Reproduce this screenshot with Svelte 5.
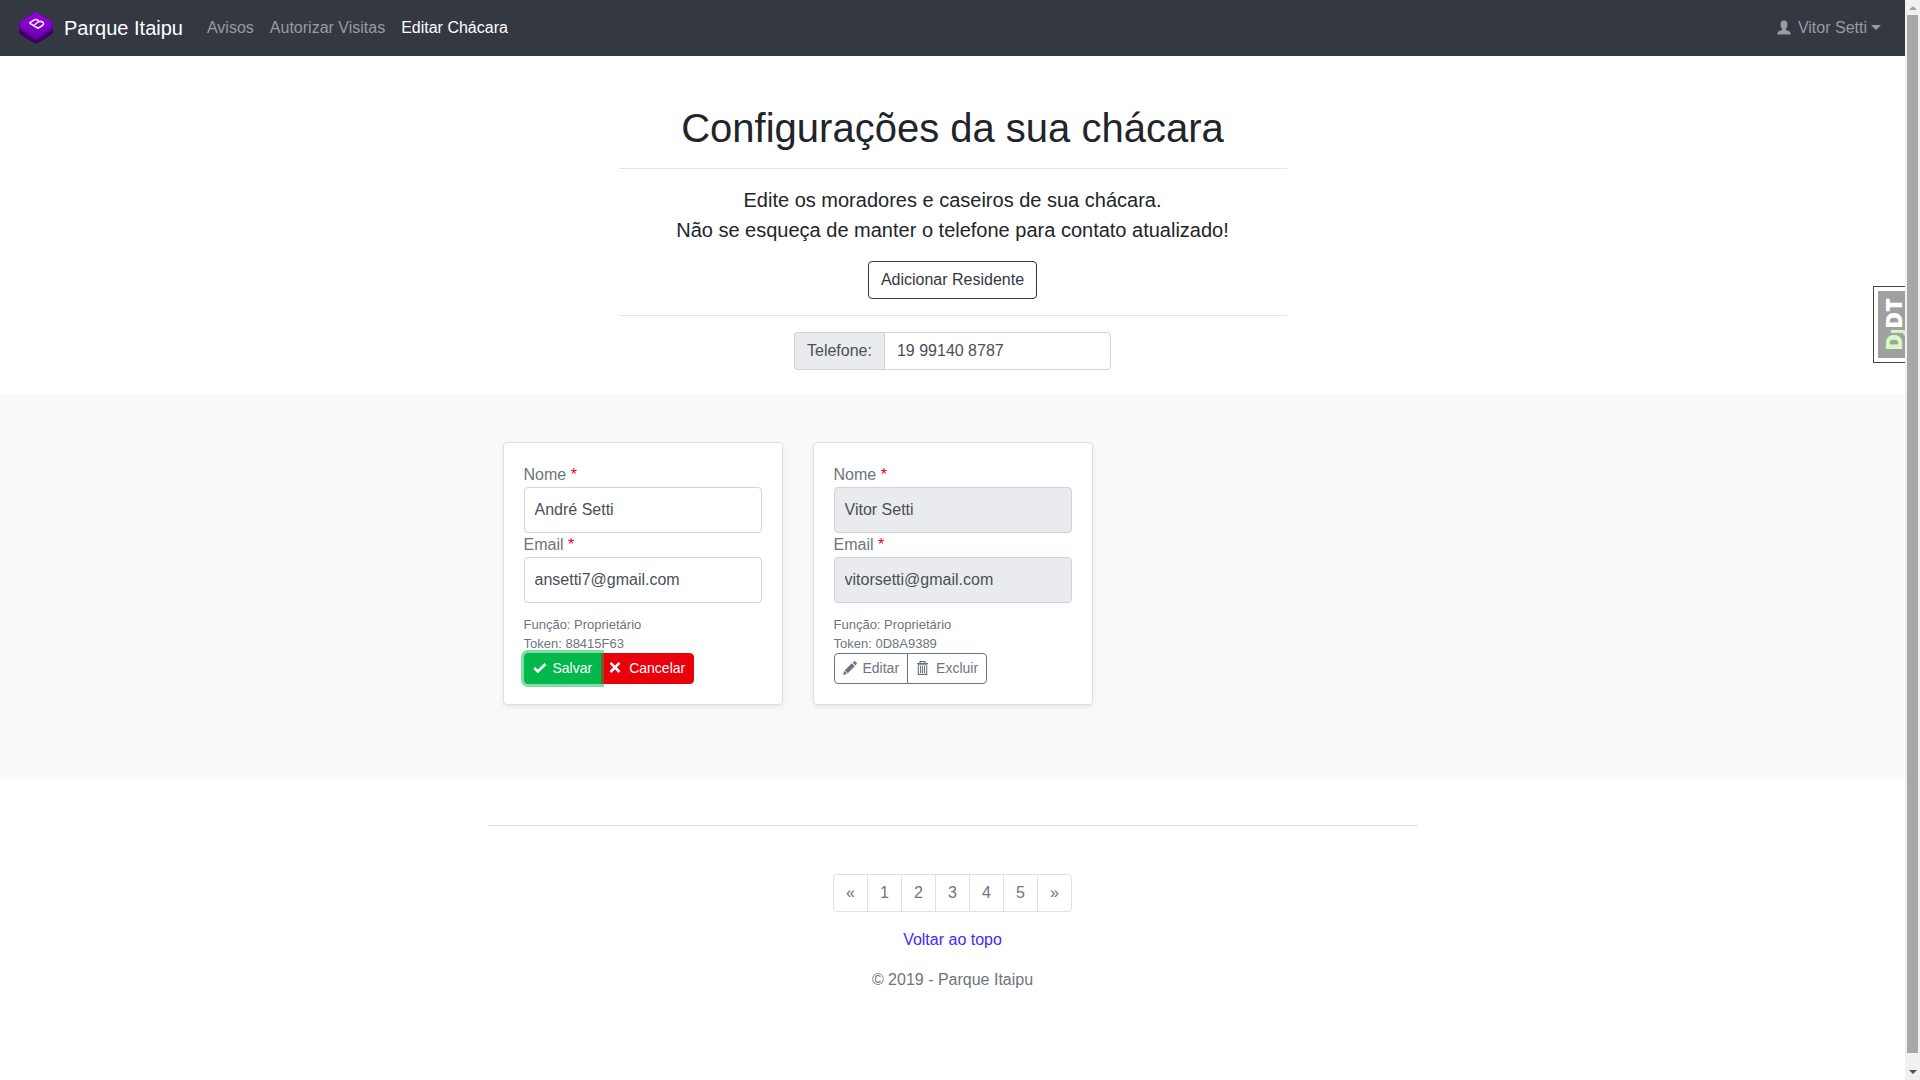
<script>
  const links = ['Avisos', 'Autorizar Visitas', 'Editar Chácara'];
  const pages = ['«', '1', '2', '3', '4', '5', '»'];
  const residents = [
    { id: 'r1', name: 'André Setti', email: 'ansetti7@gmail.com', role: 'Proprietário', token: '88415F63', editing: true },
    { id: 'r2', name: 'Vitor Setti', email: 'vitorsetti@gmail.com', role: 'Proprietário', token: '0D8A9389', editing: false }
  ];
  let phone = '19 99140 8787';
</script>

<div class="window">
  <div class="page">
    <nav class="navbar">
      <a class="brand" href="#inicio">
        <svg class="logo" viewBox="-1 2 38 38" aria-hidden="true">
          <defs>
            <linearGradient id="top" x1="0" y1="0" x2="0" y2="1">
              <stop offset="0" stop-color="#9b00e0" />
              <stop offset="1" stop-color="#6a00ae" />
            </linearGradient>
          </defs>
          <path d="M2 16.500Q2 15 4 14L17 6Q19 5 21 6L34 14Q36 15 36 16.500V25Q36 26.500 34 28L21 36Q19 37 17 36L4 28Q2 26.500 2 25Z" fill="#3d0066" />
          <path d="M2 16.500V21.500Q2 23 4 24L17 32Q19 33.500 21 32L34 24Q36 23 36 21.500V16.500Z" fill="#5a0096" />
          <path d="M3 17Q1.500 15.500 4 14L17 6Q19 4.500 21 6L34 14Q36.500 15.500 35 17V20Q35 21 33 22L21 30.500Q19 32 17 30.500L5 22Q3 21 3 20Z" fill="url(#top)" />
          <path d="M12.300 16L21 21.300L25.500 18.500Q27.500 16.500 25.500 15Q23.500 13.800 21 15L17 18.500M12.300 16L16.500 13.300Q19 12 20.700 13Q22 14 21 15" fill="none" stroke="#f3e4fb" stroke-width="1.600" stroke-linejoin="round" />
        </svg>
        <span>Parque Itaipu</span>
      </a>
      <div class="links">
        {#each links as link, i}
          <a href="#nav{i}" class:active={i === 2}>{link}</a>
        {/each}
      </div>
      <a class="user" href="#conta">
        <svg viewBox="0 0 14 16" aria-hidden="true"><path d="M7 .5C9.600 .5 10.600 2.200 10.400 4.800C10.300 7 9.500 8 9 8.800V10L12.300 11.200Q13.700 12 13.700 14.500H.3Q.3 12 1.700 11.200L5 10V8.800C4.500 8 3.700 7 3.600 4.800C3.400 2.200 4.400 .5 7 .5Z" fill="currentColor" /></svg>
        <span>Vitor Setti</span>
        <i class="caret"></i>
      </a>
    </nav>

    <header class="intro">
      <h1>Configurações da sua chácara</h1>
      <hr />
      <p>Edite os moradores e caseiros de sua chácara.<br />Não se esqueça de manter o telefone para contato atualizado!</p>
      <button class="add" type="button">Adicionar Residente</button>
      <hr />
      <div class="phone">
        <label for="phone">Telefone:</label>
        <input id="phone" type="text" bind:value={phone} />
      </div>
    </header>

    <main class="album">
      <div class="row">
        {#each residents as r}
          <form class="card">
            <label for="{r.id}-name">Nome <span class="req">*</span></label>
            <input id="{r.id}-name" type="text" value={r.name} disabled={!r.editing} />
            <label for="{r.id}-email">Email <span class="req">*</span></label>
            <input id="{r.id}-email" type="email" value={r.email} disabled={!r.editing} />
            <p class="meta">Função: {r.role}<br />Token: {r.token}</p>
            <div class="group">
              {#if r.editing}
                <button type="button" class="save">
                  <svg viewBox="0 0 14 14" aria-hidden="true"><path d="M1.200 7L4.800 10.500L12.500 3" fill="none" stroke="currentColor" stroke-width="2.600" /></svg>
                  <span>Salvar</span>
                </button>
                <button type="button" class="cancel">
                  <svg viewBox="0 0 14 14" aria-hidden="true"><path d="M1.500 1.800L10.500 11M10.500 1.800L1.500 11" fill="none" stroke="currentColor" stroke-width="2.600" /></svg>
                  <span>Cancelar</span>
                </button>
              {:else}
                <button type="button" class="plain">
                  <svg viewBox="0 0 14 14" aria-hidden="true"><path d="M0 14L1.200 9.800L4.200 12.800ZM1.800 9.200L8.800 2.300L11.700 5.200L4.800 12.200ZM9.600 1.600L11 .4Q11.700 -.2 12.400 .4L13.600 1.600Q14.200 2.300 13.600 3L12.400 4.400Z" fill="currentColor" /></svg>
                  <span>Editar</span>
                </button>
                <button type="button" class="plain">
                  <svg viewBox="0 0 14 14" aria-hidden="true"><path d="M1 2.500H12M4 2V.6H9V2M2.300 4.500V13.400H10.700V4.500M4.500 5V12M6.500 5V12M8.500 5V12M1.500 3.800H11.500" fill="none" stroke="currentColor" stroke-width="1.100" /></svg>
                  <span>Excluir</span>
                </button>
              {/if}
            </div>
          </form>
        {/each}
      </div>
    </main>

    <footer class="footer">
      <hr />
      <ul class="pagination">
        {#each pages as p, i}
          <li><a href="#p{i}">{p}</a></li>
        {/each}
      </ul>
      <p><a href="#topo">Voltar ao topo</a></p>
      <p>© 2019 - Parque Itaipu</p>
    </footer>

    <button class="debug" type="button" aria-label="Mostrar barra de depuração">
      <span class="handle"><span class="word"><span class="dj">D<small>J</small></span>DT</span></span>
    </button>
  </div>

  <div class="scrollbar" aria-hidden="true">
    <i class="up"></i>
    <i class="thumb"></i>
    <i class="down"></i>
  </div>
</div>

<style>
  :global(body) {
    margin: 0;
    background: #fff;
    color: #212529;
    font: 16px/24px "Liberation Sans", Arial, sans-serif;
  }
  * { box-sizing: border-box; }
  a { text-decoration: none; }
  button, input { font: inherit; margin: 0; }
  .window { display: grid; grid-template-columns: minmax(0, 1fr) 15px; min-height: 100vh; }
  .page { position: relative; }

  .navbar {
    display: flex;
    align-items: center;
    min-height: 56px;
    padding: 0 24px 0 16px;
    background: #343841;
  }
  .brand { display: flex; align-items: center; gap: 10px; margin-right: 16px; color: #fff; font-size: 20px; line-height: 30px; }
  .logo { width: 38px; height: 38px; }
  .links { display: flex; flex: 1; }
  .links a { padding: 8px; color: #999ba0; }
  .links a.active { color: #fff; }
  .user { display: flex; align-items: center; color: #999ba0; }
  .user svg { width: 14px; height: 16px; margin-right: 7px; }
  .caret { margin: 0 0 2px 4px; border: 5px solid transparent; border-top-color: currentColor; border-bottom: 0; }

  .intro { max-width: 700px; margin: 0 auto; padding: 48px 16px 24px; text-align: center; }
  h1 { margin: 0; font-size: 40px; font-weight: 400; line-height: 48px; }
  hr { width: 100%; margin: 16px 0; border: 0; border-top: 1px solid #e5e5e6; }
  .intro p { margin: 0 0 16px; font-size: 20px; line-height: 30px; }
  .add { display: block; margin: 0 auto; padding: 6px 12px; border: 1px solid #343841; border-radius: 4px; background: #fff; color: #343841; line-height: 24px; }
  .phone { display: flex; width: 317px; max-width: 100%; margin: 0 auto; }
  .phone label { padding: 6px 12px; border: 1px solid #ced4da; border-right: 0; border-radius: 4px 0 0 4px; background: #e9ebef; color: #495057; }
  .phone input { flex: 1; min-width: 0; padding: 6px 12px; border: 1px solid #ced4da; border-radius: 0 4px 4px 0; background: #fff; color: #495057; line-height: 24px; }

  .album { padding: 48px 16px; background: #f8f9fb; }
  .row { display: grid; grid-template-columns: repeat(3, minmax(0, 1fr)); gap: 30px; max-width: 900px; margin: 0 auto 24px; }
  .card { padding: 20px; border: 1px solid #dfdfe0; border-radius: 4px; background: #fff; box-shadow: 0 2px 4px rgba(0, 0, 0, 0.075); color: #6c757d; }
  .card label { display: block; }
  .req { color: #e9000b; }
  .card input { display: block; width: 100%; height: 46px; padding: 10px; border: 1px solid #ced4da; border-radius: 4px; background: #fff; color: #495057; }
  .card input:disabled { background: #e9ebef; }
  .meta { margin: 12px 0 0; font-size: 13px; line-height: 19px; }
  .group { display: flex; }
  .group button { display: flex; align-items: center; gap: 6px; padding: 4px 8px; border: 1px solid; font-size: 14px; line-height: 21px; }
  .group button:first-child { border-radius: 4px 0 0 4px; }
  .group button:last-child { margin-left: -1px; border-radius: 0 4px 4px 0; }
  .group svg { width: 14px; height: 14px; margin-bottom: 2px; }
  .group .save { position: relative; z-index: 1; border-color: #00b94a; background: #00b94a; color: #fff; box-shadow: 0 0 0 3px rgba(0, 185, 74, 0.5); }
  .group .cancel { border-color: #e9000b; background: #e9000b; color: #fff; }
  .group .plain { border-color: #6c757d; background: #fff; color: #6c757d; }

  .footer { max-width: 930px; margin: 0 auto; padding: 48px 0; text-align: center; color: #6c757d; }
  .footer hr { margin: 0 0 48px; border-color: #dfe1e8; }
  .footer p { margin: 0 0 16px; }
  .footer p a { color: #4328ff; }
  .pagination { display: flex; justify-content: center; margin: 0 0 16px; padding: 0; list-style: none; }
  .pagination a { display: block; width: 35px; margin-left: -1px; padding: 6px 0; border: 1px solid #dee0e7; color: #6c757d; }
  .pagination li:first-child a { margin-left: 0; border-radius: 4px 0 0 4px; }
  .pagination li:last-child a { border-radius: 0 4px 4px 0; }

  .debug { position: absolute; top: 286px; right: 0; width: 32px; height: 77px; padding: 4px 0 4px 4px; border: 1px solid #444; border-right: 0; background: #fff; }
  .handle { display: flex; align-items: center; justify-content: center; height: 100%; padding-left: 3px; background: #a0a0a0; color: #fff; font: 800 23px/23px "Open Sans", sans-serif; }
  .word { flex: none; transform: rotate(-90deg); }
  .dj { color: #d8f8c4; }
  .dj small { font-size: 15px; line-height: 15px; }

  .scrollbar { display: flex; flex-direction: column; align-items: center; padding: 6px 0; background: #f1f1f1; }
  .thumb { flex: 1; width: 11px; margin: 5px 0 17px; background: #a8a8a8; }
  .up { border: 4px solid transparent; border-bottom-color: #a3a3a3; border-top: 0; }
  .down { border: 4px solid transparent; border-top-color: #505050; border-bottom: 0; }
</style>
